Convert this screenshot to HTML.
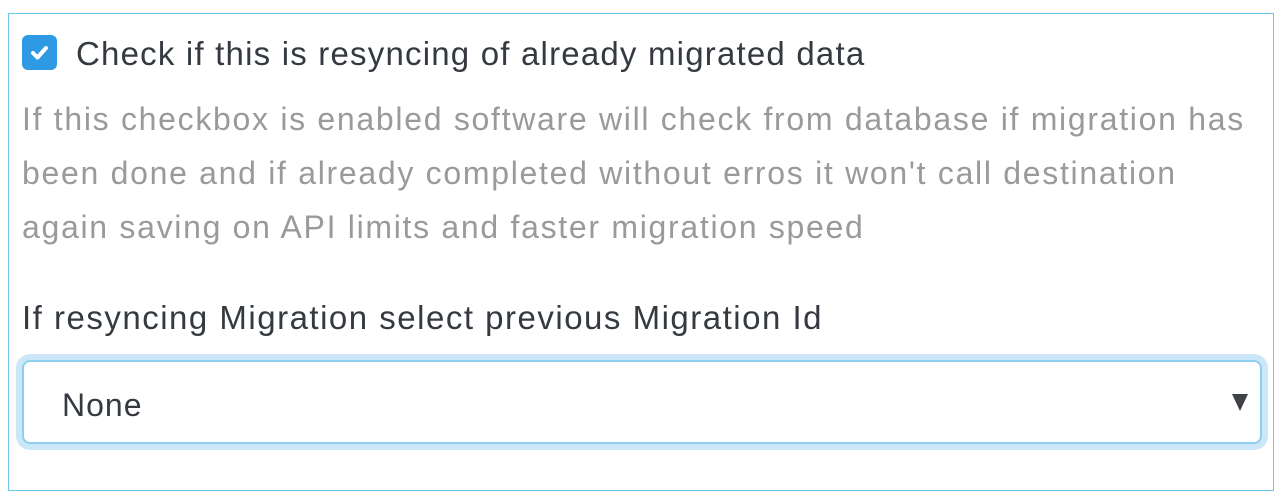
<!DOCTYPE html>
<html><head><style>
body{margin:0;width:1286px;height:503px;background:#fff;font-family:"Liberation Sans",sans-serif;position:relative;overflow:hidden}
.box{position:absolute;left:8px;top:13px;width:1266px;height:478px;border:1.5px solid #6cc6e6;box-sizing:border-box}
.cb{position:absolute;left:22px;top:35px;width:35px;height:35px;background:#2f9ae4;border-radius:6px}
.t1{position:absolute;left:76px;top:35px;font-size:33px;letter-spacing:1.2px;color:#343a40;white-space:nowrap}
.help{position:absolute;left:22px;top:92px;font-size:32px;letter-spacing:1.7px;line-height:54px;color:#9a9a9a;white-space:nowrap}
.lbl{position:absolute;left:22px;top:299px;font-size:33px;letter-spacing:1.5px;color:#343a40;white-space:nowrap}
.sel{position:absolute;left:22px;top:360px;width:1240px;height:84px;box-sizing:border-box;border:2px solid #8ecff0;border-radius:8px;box-shadow:0 0 0 6px #cbe7f8}
.none{position:absolute;left:38px;top:25px;font-size:32px;letter-spacing:1px;color:#343a40}
.arr{position:absolute;right:12px;top:32px;width:0;height:0;border-left:8px solid transparent;border-right:8px solid transparent;border-top:17px solid #3f4347}
</style></head><body>
<div class="box"></div>
<div class="cb"><svg width="35" height="35" viewBox="0 0 35 35"><path d="M11 18l4.5 4.5L24 13" stroke="#fff" stroke-width="4" fill="none" stroke-linecap="round" stroke-linejoin="round"/></svg></div>
<div class="t1">Check if this is resyncing of already migrated data</div>
<div class="help">If this checkbox is enabled software will check from database if migration has<br>been done and if already completed without erros it won't call destination<br>again saving on API limits and faster migration speed</div>
<div class="lbl">If resyncing Migration select previous Migration Id</div>
<div class="sel"><div class="none">None</div><div class="arr"></div></div>
</body></html>
